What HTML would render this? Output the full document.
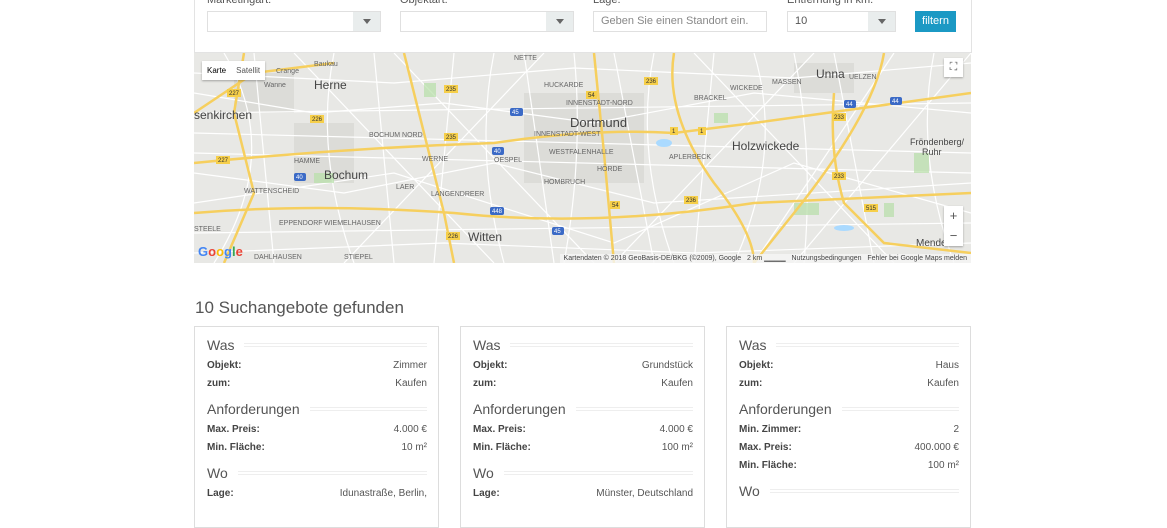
<!DOCTYPE html><html><head><meta charset="utf-8"><style>
body{margin:0;background:#fff;font-family:"Liberation Sans",sans-serif;width:1167px;height:500px;overflow:hidden;position:relative}
.panel{position:absolute;left:194px;top:-10px;width:776px;height:62px;border:1px solid #e3e3e3;border-top:none;background:#fff}
.lbl{position:absolute;top:-6px;font-size:11px;color:#555}
.sel{position:absolute;top:11px;height:19px;border:1px solid #e0e0e0;background:#fff;font-size:11px;color:#888;line-height:19px;padding-left:7px;box-sizing:content-box}
.arr{position:absolute;right:0;top:0;width:27px;height:19px;background:#e9eded}
.arr:after{content:"";position:absolute;left:10px;top:7px;border-left:4px solid transparent;border-right:4px solid transparent;border-top:5px solid #666}
.btn{position:absolute;left:915px;top:11px;width:41px;height:21px;background:#1b99c4;color:#fff;font-size:11px;text-align:center;line-height:21px}
.map{position:absolute;left:194px;top:53px;width:777px;height:210px;background:#e8e8e5;overflow:hidden}
h2{position:absolute;left:195px;top:298px;margin:0;font-weight:normal;font-size:17px;color:#555}
.card{position:absolute;top:326px;width:243px;height:200px;border:1px solid #ddd;background:#fff}
.sec{position:absolute;left:12px;font-size:14px;color:#555;display:flex;align-items:center;width:220px}
.sec span{margin-right:10px}.sec i{flex:1;border-top:1px solid #eee;border-bottom:1px solid #eee;height:2px}
.row{position:absolute;left:12px;width:220px;font-size:10px;color:#555;display:flex;justify-content:space-between}
.row b{color:#444}
</style></head><body>
<div class="panel"></div>
<div class="lbl" style="left:207px">Marketingart:</div>
<div class="lbl" style="left:400px">Objektart:</div>
<div class="lbl" style="left:593px">Lage:</div>
<div class="lbl" style="left:787px">Entfernung in km:</div>
<div class="sel" style="left:207px;width:165px"><div class="arr"></div></div>
<div class="sel" style="left:400px;width:165px"><div class="arr"></div></div>
<div class="sel" style="left:593px;width:165px">Geben Sie einen Standort ein.</div>
<div class="sel" style="left:787px;width:100px;color:#555">10<div class="arr"></div></div>
<div class="btn">filtern</div>
<div class="map">
<svg width="777" height="210" style="position:absolute;left:0;top:0" font-family="Liberation Sans" font-size="7" fill="#666">
<g fill="#dcdcd8"><rect x="330" y="40" width="120" height="90"/><rect x="100" y="70" width="60" height="60"/><rect x="40" y="20" width="60" height="40"/><rect x="600" y="10" width="60" height="30"/></g>
<g stroke="#fff" stroke-width="1.2" fill="none">
<path d="M0 40 L120 60 L250 50 L400 70 L560 40 L777 60"/><path d="M0 120 L150 140 L300 110 L460 150 L777 130"/><path d="M60 0 L80 210"/><path d="M180 0 L200 210"/><path d="M330 0 L360 210"/><path d="M520 0 L500 210"/><path d="M640 0 L680 210"/><path d="M0 180 L777 170"/><path d="M0 80 L777 100"/><path d="M100 0 L300 210"/><path d="M700 0 L560 210"/><path d="M420 0 L460 210"/><path d="M260 0 L240 210"/>
<path d="M0 20 L200 30 L380 15 L600 25 L777 10"/><path d="M0 150 L200 120 L420 190 L600 110 L777 160"/><path d="M0 200 L250 190 L500 200 L777 190"/><path d="M30 0 Q90 100 20 210"/><path d="M140 0 Q120 100 160 210"/><path d="M300 0 Q280 100 310 210"/><path d="M380 0 Q390 100 370 210"/><path d="M460 0 Q440 100 480 210"/><path d="M560 0 Q590 100 540 210"/><path d="M600 0 Q620 100 610 210"/><path d="M740 0 Q720 100 760 210"/><path d="M0 60 L777 50"/><path d="M0 100 L777 120"/><path d="M200 0 L400 210"/><path d="M500 0 L700 210"/><path d="M777 0 L600 210"/><path d="M350 0 L150 210"/><path d="M620 0 L420 210"/>
</g>
<g fill="#b7dfa8" opacity=".7"><rect x="120" y="120" width="20" height="10"/><rect x="600" y="150" width="25" height="12"/><rect x="720" y="100" width="15" height="20"/><rect x="230" y="30" width="12" height="14"/><rect x="520" y="60" width="14" height="10"/><rect x="690" y="150" width="10" height="14"/></g>
<g fill="#aadaff"><ellipse cx="470" cy="90" rx="8" ry="4"/><ellipse cx="650" cy="175" rx="10" ry="3"/></g>
<g stroke="#f6cf5e" stroke-width="2.5" fill="none">
<path d="M0 110 Q150 95 300 90 Q400 75 480 80 L560 70 L777 40"/>
<path d="M0 160 Q120 150 260 160 Q400 175 560 150 L777 140"/>
<path d="M50 0 L40 60 L60 140 L30 210"/><path d="M210 0 L230 80 L250 160 L260 210"/><path d="M400 0 L410 100 L420 210"/>
<path d="M480 0 Q470 60 520 130 Q560 180 560 210"/><path d="M690 0 Q680 60 600 160 L560 210"/><path d="M640 40 Q635 100 650 150 L690 190 L777 200"/><path d="M0 60 L60 20 L140 10"/>
</g>
<g font-size="12" fill="#444"><text x="120" y="36">Herne</text><text x="376" y="74" font-size="13">Dortmund</text><text x="130" y="126">Bochum</text><text x="274" y="188">Witten</text><text x="538" y="97">Holzwickede</text><text x="622" y="25">Unna</text><text x="0" y="66">senkirchen</text><text x="716" y="92" font-size="9">Fröndenberg/</text><text x="728" y="102" font-size="9">Ruhr</text><text x="722" y="193" font-size="10">Mende</text></g>
<text x="350" y="34">HUCKARDE</text><text x="372" y="52">INNENSTADT-NORD</text><text x="340" y="83">INNENSTADT-WEST</text><text x="355" y="101">WESTFALENHALLE</text><text x="300" y="109">OESPEL</text><text x="403" y="118">HÖRDE</text><text x="350" y="131">HOMBRUCH</text><text x="475" y="106">APLERBECK</text><text x="175" y="84">BOCHUM NORD</text><text x="50" y="140">WATTENSCHEID</text><text x="237" y="143">LANGENDREER</text><text x="130" y="172">WIEMELHAUSEN</text><text x="150" y="206">STIEPEL</text><text x="60" y="206">DAHLHAUSEN</text><text x="82" y="20">Crange</text><text x="120" y="13">Baukau</text><text x="70" y="34">Wanne</text><text x="320" y="7">NETTE</text><text x="536" y="37">WICKEDE</text><text x="500" y="47">BRACKEL</text><text x="578" y="31">MASSEN</text><text x="655" y="26">UELZEN</text><text x="100" y="110">HAMME</text><text x="228" y="108">WERNE</text><text x="202" y="136">LAER</text><text x="0" y="178">STEELE</text><text x="85" y="172">EPPENDORF</text>
<g font-size="6" fill="#333"><rect x="33" y="36" width="14" height="8" fill="#f6cf4a"/><text x="35" y="42">227</text><rect x="392" y="38" width="11" height="8" fill="#f6cf4a"/><text x="394" y="44">54</text><rect x="450" y="24" width="14" height="8" fill="#f6cf4a"/><text x="452" y="30">236</text><rect x="476" y="74" width="8" height="8" fill="#f6cf4a"/><text x="478" y="80">1</text><rect x="504" y="74" width="8" height="8" fill="#f6cf4a"/><text x="506" y="80">1</text><rect x="638" y="119" width="14" height="8" fill="#f6cf4a"/><text x="640" y="125">233</text><rect x="638" y="60" width="14" height="8" fill="#f6cf4a"/><text x="640" y="66">233</text><rect x="670" y="151" width="14" height="8" fill="#f6cf4a"/><text x="672" y="157">515</text><rect x="250" y="80" width="14" height="8" fill="#f6cf4a"/><text x="252" y="86">235</text><rect x="250" y="32" width="14" height="8" fill="#f6cf4a"/><text x="252" y="38">235</text><rect x="252" y="179" width="14" height="8" fill="#f6cf4a"/><text x="254" y="185">226</text><rect x="116" y="62" width="14" height="8" fill="#f6cf4a"/><text x="118" y="68">226</text><rect x="22" y="103" width="14" height="8" fill="#f6cf4a"/><text x="24" y="109">227</text><rect x="416" y="148" width="10" height="8" fill="#f6cf4a"/><text x="418" y="154">54</text><rect x="490" y="143" width="14" height="8" fill="#f6cf4a"/><text x="492" y="149">236</text><rect x="316" y="55" width="13" height="8" rx="2" fill="#3b6ac6"/><text x="318" y="61" fill="#fff">45</text><rect x="296" y="154" width="14" height="8" rx="2" fill="#3b6ac6"/><text x="298" y="160" fill="#fff">448</text><rect x="650" y="47" width="12" height="8" rx="2" fill="#3b6ac6"/><text x="652" y="53" fill="#fff">44</text><rect x="696" y="44" width="12" height="8" rx="2" fill="#3b6ac6"/><text x="698" y="50" fill="#fff">44</text><rect x="298" y="94" width="12" height="8" rx="2" fill="#3b6ac6"/><text x="300" y="100" fill="#fff">40</text><rect x="100" y="120" width="12" height="8" rx="2" fill="#3b6ac6"/><text x="102" y="126" fill="#fff">40</text><rect x="358" y="174" width="12" height="8" rx="2" fill="#3b6ac6"/><text x="360" y="180" fill="#fff">45</text></g>
</svg>
<div style="position:absolute;left:8px;top:8px;background:#fff;font-size:8px;display:flex;box-shadow:0 1px 2px rgba(0,0,0,.3)"><div style="padding:5px 5px;color:#000">Karte</div><div style="padding:5px 5px;color:#555">Satellit</div></div>
<div style="position:absolute;right:8px;top:5px;width:19px;height:19px;background:#fff;box-shadow:0 1px 2px rgba(0,0,0,.3);font-size:11px;text-align:center;line-height:19px;color:#555">⛶</div>
<div style="position:absolute;right:8px;top:153px;width:19px;height:40px;background:#fff;box-shadow:0 1px 2px rgba(0,0,0,.3);font-size:13px;text-align:center;color:#555;line-height:20px">+<br>−</div>
<div style="position:absolute;left:4px;top:191px;font-size:13px;font-weight:bold;color:#4285f4">G<span style="color:#ea4335">o</span><span style="color:#fbbc05">o</span>g<span style="color:#34a853">l</span><span style="color:#ea4335">e</span></div>
<div style="position:absolute;right:0;top:201px;height:9px;background:rgba(245,245,245,.8);font-size:7px;color:#444;padding:0 4px;line-height:9px;white-space:nowrap">Kartendaten © 2018 GeoBasis-DE/BKG (©2009), Google &nbsp; 2 km ▁▁▁▁ &nbsp; Nutzungsbedingungen &nbsp; Fehler bei Google Maps melden</div>
</div>
<h2>10 Suchangebote gefunden</h2>

<div class="card" style="left:194px">
<div class="sec" style="top:10px"><span>Was</span><i></i></div>
<div class="row" style="top:33px"><b>Objekt:</b><span>Zimmer</span></div>
<div class="row" style="top:51px"><b>zum:</b><span>Kaufen</span></div>
<div class="sec" style="top:74px"><span>Anforderungen</span><i></i></div>
<div class="row" style="top:97px"><b>Max. Preis:</b><span>4.000 €</span></div>
<div class="row" style="top:115px"><b>Min. Fläche:</b><span>10 m²</span></div>
<div class="sec" style="top:138px"><span>Wo</span><i></i></div>
<div class="row" style="top:161px"><b>Lage:</b><span>Idunastraße, Berlin,</span></div>
</div>
<div class="card" style="left:460px">
<div class="sec" style="top:10px"><span>Was</span><i></i></div>
<div class="row" style="top:33px"><b>Objekt:</b><span>Grundstück</span></div>
<div class="row" style="top:51px"><b>zum:</b><span>Kaufen</span></div>
<div class="sec" style="top:74px"><span>Anforderungen</span><i></i></div>
<div class="row" style="top:97px"><b>Max. Preis:</b><span>4.000 €</span></div>
<div class="row" style="top:115px"><b>Min. Fläche:</b><span>100 m²</span></div>
<div class="sec" style="top:138px"><span>Wo</span><i></i></div>
<div class="row" style="top:161px"><b>Lage:</b><span>Münster, Deutschland</span></div>
</div>
<div class="card" style="left:726px">
<div class="sec" style="top:10px"><span>Was</span><i></i></div>
<div class="row" style="top:33px"><b>Objekt:</b><span>Haus</span></div>
<div class="row" style="top:51px"><b>zum:</b><span>Kaufen</span></div>
<div class="sec" style="top:74px"><span>Anforderungen</span><i></i></div>
<div class="row" style="top:97px"><b>Min. Zimmer:</b><span>2</span></div>
<div class="row" style="top:115px"><b>Max. Preis:</b><span>400.000 €</span></div>
<div class="row" style="top:133px"><b>Min. Fläche:</b><span>100 m²</span></div>
<div class="sec" style="top:156px"><span>Wo</span><i></i></div>
</div>
</body></html>
